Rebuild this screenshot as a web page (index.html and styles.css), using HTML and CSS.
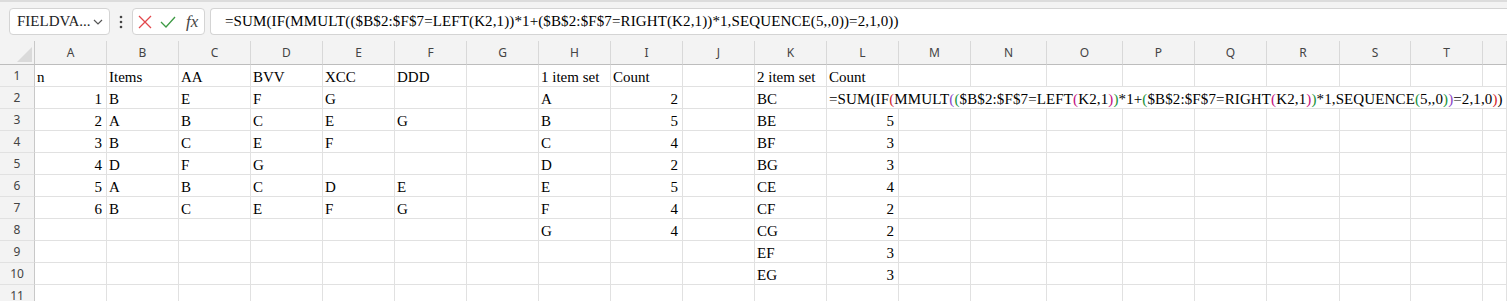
FILE: index.html
```html
<!DOCTYPE html>
<html lang="en">
<head>
    <meta charset="UTF-8">
    <meta name="viewport" content="width=device-width, initial-scale=1.0">
    <title>Itemset Counts</title>
    <link rel="stylesheet" href="styles.css">
</head>
<body>
    <!-- Formula bar -->
    <div class="toolbar">
        <div class="name-box">
            <span class="name-text">FIELDVA...</span>
            <svg class="chevron" width="10" height="6" viewBox="0 0 10 6">
                <polyline points="1,1 5,5 9,1" fill="none" stroke="#555" stroke-width="1.2"/>
            </svg>
        </div>
        <div class="kebab">
            <svg width="4" height="14" viewBox="0 0 4 14">
                <circle cx="2" cy="2" r="1.3" fill="#444"/>
                <circle cx="2" cy="7" r="1.3" fill="#444"/>
                <circle cx="2" cy="12" r="1.3" fill="#444"/>
            </svg>
        </div>
        <div class="fx-box">
            <svg class="cancel" width="14" height="14" viewBox="0 0 14 14">
                <path d="M1 1 L13 13 M13 1 L1 13" stroke="#e2474c" stroke-width="1.3" fill="none"/>
            </svg>
            <svg class="enter" width="16" height="12" viewBox="0 0 16 12">
                <polyline points="1,6 6,11 15,1" stroke="#3d9a44" stroke-width="1.3" fill="none"/>
            </svg>
            <span class="fx">fx</span>
        </div>
        <div class="formula-input">=SUM(IF(MMULT(($B$2:$F$7=LEFT(K2,1))*1+($B$2:$F$7=RIGHT(K2,1))*1,SEQUENCE(5,,0))=2,1,0))</div>
    </div>

    <!-- Worksheet grid -->
    <div class="sheet" id="sheet"></div>

    <script>
        const columns = ['A','B','C','D','E','F','G','H','I','J','K','L','M','N','O','P','Q','R','S','T',''];

        const formula =
            '=SUM(IF<span class="p1">(</span>MMULT<span class="p2">(</span><span class="p3">(</span>' +
            '$B$2:$F$7=LEFT<span class="p4">(</span>K2,1<span class="p4">)</span><span class="p3">)</span>' +
            '*1+<span class="p3">(</span>$B$2:$F$7=RIGHT<span class="p4">(</span>K2,1<span class="p4">)</span>' +
            '<span class="p3">)</span>*1,SEQUENCE<span class="p3">(</span>5,,0<span class="p3">)</span>' +
            '<span class="p2">)</span>=2,1,0<span class="p1">)</span>)';

        // One array per row, columns A..L
        const rows = [
            ['n', 'Items', 'AA', 'BVV', 'XCC', 'DDD', '', '1 item set', 'Count', '', '2 item set', 'Count'],
            [1, 'B', 'E', 'F', 'G', '', '', 'A', 2, '', 'BC', { html: formula }],
            [2, 'A', 'B', 'C', 'E', 'G', '', 'B', 5, '', 'BE', 5],
            [3, 'B', 'C', 'E', 'F', '', '', 'C', 4, '', 'BF', 3],
            [4, 'D', 'F', 'G', '', '', '', 'D', 2, '', 'BG', 3],
            [5, 'A', 'B', 'C', 'D', 'E', '', 'E', 5, '', 'CE', 4],
            [6, 'B', 'C', 'E', 'F', 'G', '', 'F', 4, '', 'CF', 2],
            ['', '', '', '', '', '', '', 'G', 4, '', 'CG', 2],
            ['', '', '', '', '', '', '', '', '', '', 'EF', 3],
            ['', '', '', '', '', '', '', '', '', '', 'EG', 3],
            []
        ];

        const sheet = document.getElementById('sheet');

        function addCell(className, content) {
            const cell = document.createElement('div');
            cell.className = className;
            if (content !== undefined) cell.textContent = content;
            sheet.appendChild(cell);
            return cell;
        }

        // Column headers
        addCell('corner');
        columns.forEach(name => addCell('col-head', name));

        // Rows
        rows.forEach((row, r) => {
            addCell('row-head', r + 1);
            for (let c = 0; c < columns.length; c++) {
                const value = row[c];
                if (value && value.html) {
                    // long formula text runs over the empty cells to its right
                    const cell = addCell('cell overflow');
                    cell.innerHTML = value.html;
                    cell.style.gridColumn = 'span ' + (columns.length - c);
                    break;
                }
                if (typeof value === 'number') {
                    addCell('cell num', value);
                } else {
                    addCell('cell', value || '');
                }
            }
        });
    </script>
</body>
</html>
```

FILE: styles.css
```css
/* Base styles */
* {
    margin: 0;
    padding: 0;
    box-sizing: border-box;
}

body {
    font-family: 'Liberation Serif', 'Times New Roman', serif;
    background-color: #ffffff;
    color: #000;
    overflow: hidden;
}

/* Formula bar */
.toolbar {
    height: 41px;
    background-color: #f3f3f3;
    border-top: 2px solid #dcdcdc;
    display: flex;
    align-items: center;
    padding: 0 0 0 9px;
}

.name-box {
    width: 101px;
    height: 27px;
    background-color: #fff;
    border: 1px solid #d4d4d4;
    border-radius: 4px;
    display: flex;
    align-items: center;
    justify-content: space-between;
    padding: 0 6px 0 7px;
    font-size: 15px;
    color: #222;
}

.chevron {
    margin-top: 1px;
}

.kebab {
    width: 22px;
    display: flex;
    justify-content: center;
    align-items: center;
}

.fx-box {
    width: 73px;
    height: 27px;
    background-color: #fff;
    border: 1px solid #d4d4d4;
    border-radius: 4px;
    display: flex;
    align-items: center;
    padding-left: 5px;
}

.fx-box .cancel {
    margin-right: 8px;
}

.fx-box .enter {
    margin-right: 10px;
}

.fx {
    font-style: italic;
    font-size: 17px;
    color: #444;
    font-family: 'Liberation Serif', serif;
}

.formula-input {
    flex: 1;
    height: 27px;
    margin-left: 5px;
    background-color: #fff;
    border: 1px solid #d4d4d4;
    border-right: none;
    border-radius: 4px 0 0 4px;
    padding-left: 14px;
    font-size: 15px;
    line-height: 25px;
    letter-spacing: 0.12px;
    white-space: nowrap;
    overflow: hidden;
}

/* Worksheet grid */
.sheet {
    display: grid;
    grid-template-columns: 35px repeat(13, 72px) 76px 76px 72px 72px 73px 71px 72px 1fr;
    grid-auto-rows: 22px;
    grid-template-rows: 24px;
}

.corner,
.col-head,
.row-head {
    background-color: #f3f3f3;
    font-family: 'Noto Sans', 'Open Sans', sans-serif;
    font-size: 12px;
    color: #444;
}

.corner {
    border-right: 1px solid #c8c8c8;
    border-bottom: 1px solid #bdbdbd;
    position: relative;
}

/* little select-all triangle */
.corner::after {
    content: '';
    position: absolute;
    right: 2px;
    bottom: 2px;
    border-style: solid;
    border-width: 0 0 15px 15px;
    border-color: transparent transparent #dadada transparent;
}

.col-head {
    display: flex;
    align-items: center;
    justify-content: center;
    border-bottom: 1px solid #bdbdbd;
    border-right: 1px solid #d8d8d8;
    padding-bottom: 1px;
}

.row-head {
    display: flex;
    align-items: center;
    justify-content: center;
    border-right: 1px solid #c8c8c8;
    border-bottom: 1px solid #e1e1e1;
}

.cell {
    border-right: 1px solid #e1e1e1;
    border-bottom: 1px solid #e1e1e1;
    font-size: 15px;
    line-height: 18px;
    padding: 3px 2px 0 2px;
    white-space: nowrap;
    overflow: hidden;
}

.cell.num {
    text-align: right;
    padding-right: 4px;
}

.cell.overflow {
    letter-spacing: 0.12px;
}

/* Formula parenthesis colours */
.p1 { color: #d1262b; }
.p2 { color: #8a45c5; }
.p3 { color: #17923a; }
.p4 { color: #c4117e; }
```
